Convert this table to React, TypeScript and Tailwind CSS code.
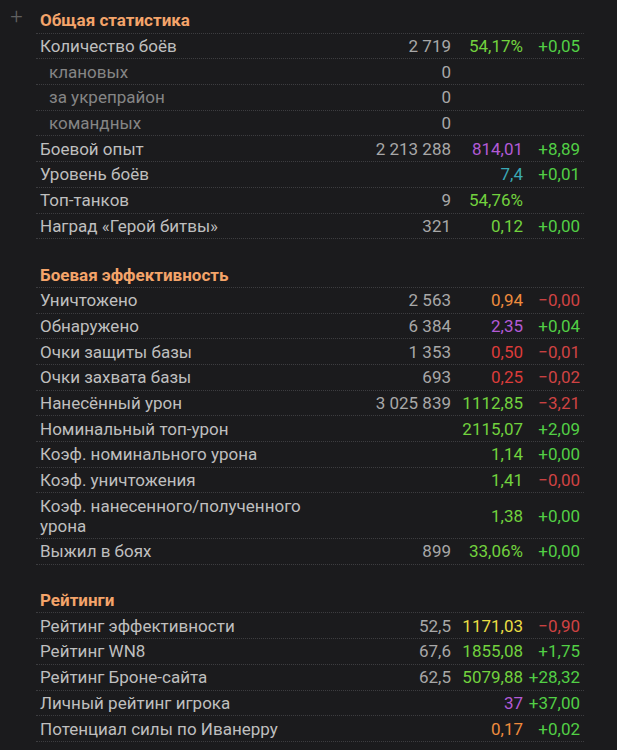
import React from 'react'

type Row = {
  label: string
  sub?: boolean
  count?: string
  value?: string
  valueColor?: string
  delta?: string
  deltaColor?: string
}

const green = 'text-[#72d23e]'
const dGreen = 'text-[#52cf45]'
const dRed = 'text-[#cf4343]'
const purple = 'text-[#b35ad6]'
const teal = 'text-[#3aa9b6]'
const orange = 'text-[#ef8c3e]'
const red = 'text-[#dc3c3a]'
const yellow = 'text-[#eadf44]'

const sections: { title: string; rows: Row[] }[] = [
  {
    title: 'Общая статистика',
    rows: [
      { label: 'Количество боёв', count: '2 719', value: '54,17%', valueColor: green, delta: '+0,05', deltaColor: dGreen },
      { label: 'клановых', sub: true, count: '0' },
      { label: 'за укрепрайон', sub: true, count: '0' },
      { label: 'командных', sub: true, count: '0' },
      { label: 'Боевой опыт', count: '2 213 288', value: '814,01', valueColor: purple, delta: '+8,89', deltaColor: dGreen },
      { label: 'Уровень боёв', value: '7,4', valueColor: teal, delta: '+0,01', deltaColor: dGreen },
      { label: 'Топ-танков', count: '9', value: '54,76%', valueColor: green },
      { label: 'Наград «Герой битвы»', count: '321', value: '0,12', valueColor: green, delta: '+0,00', deltaColor: dGreen },
    ],
  },
  {
    title: 'Боевая эффективность',
    rows: [
      { label: 'Уничтожено', count: '2 563', value: '0,94', valueColor: orange, delta: '−0,00', deltaColor: dRed },
      { label: 'Обнаружено', count: '6 384', value: '2,35', valueColor: purple, delta: '+0,04', deltaColor: dGreen },
      { label: 'Очки защиты базы', count: '1 353', value: '0,50', valueColor: red, delta: '−0,01', deltaColor: dRed },
      { label: 'Очки захвата базы', count: '693', value: '0,25', valueColor: red, delta: '−0,02', deltaColor: dRed },
      { label: 'Нанесённый урон', count: '3 025 839', value: '1112,85', valueColor: green, delta: '−3,21', deltaColor: dRed },
      { label: 'Номинальный топ-урон', value: '2115,07', valueColor: green, delta: '+2,09', deltaColor: dGreen },
      { label: 'Коэф. номинального урона', value: '1,14', valueColor: green, delta: '+0,00', deltaColor: dGreen },
      { label: 'Коэф. уничтожения', value: '1,41', valueColor: green, delta: '−0,00', deltaColor: dRed },
      { label: 'Коэф. нанесенного/полученного урона', value: '1,38', valueColor: green, delta: '+0,00', deltaColor: dGreen },
      { label: 'Выжил в боях', count: '899', value: '33,06%', valueColor: green, delta: '+0,00', deltaColor: dGreen },
    ],
  },
  {
    title: 'Рейтинги',
    rows: [
      { label: 'Рейтинг эффективности', count: '52,5', value: '1171,03', valueColor: yellow, delta: '−0,90', deltaColor: dRed },
      { label: 'Рейтинг WN8', count: '67,6', value: '1855,08', valueColor: green, delta: '+1,75', deltaColor: dGreen },
      { label: 'Рейтинг Броне-сайта', count: '62,5', value: '5079,88', valueColor: green, delta: '+28,32', deltaColor: dGreen },
      { label: 'Личный рейтинг игрока', value: '37', valueColor: purple, delta: '+37,00', deltaColor: dGreen },
      { label: 'Потенциал силы по Иванерру', value: '0,17', valueColor: orange, delta: '+0,02', deltaColor: dGreen },
    ],
  },
]

export default function App() {
  return (
    <div
      className="min-h-[750px] w-full bg-[#1b1b1d] flex text-[17px] leading-5"
      style={{ fontFamily: 'Roboto, "Noto Sans", sans-serif' }}
    >
      {/* expand toggle */}
      <div className="w-9 pt-[7px] flex justify-center pr-[3px] shrink-0">
        <span className="text-[#606060] text-[22px] font-light leading-5">+</span>
      </div>

      <div className="w-[548px] pt-[8px] flex flex-col gap-[23px]">
        {sections.map((section) => (
          <div key={section.title}>
            <div className="py-[2.35px] pl-1 border-b border-dotted border-[#3d3d40] font-bold text-[#f4a46a]">
              {section.title}
            </div>
            {section.rows.map((row) => (
              <div
                key={row.label}
                className="grid grid-cols-[276px_139px_72px_61px] items-center py-[2.35px] border-b border-dotted border-[#3d3d40]"
              >
                <div className={row.sub ? 'pl-[13px] text-[#858585]' : 'pl-1 text-[#bfbfbf]'}>
                  {row.label}
                </div>
                <div className="text-right text-[#a8a8a8]">{row.count}</div>
                <div className={`text-right ${row.valueColor ?? ''}`}>{row.value}</div>
                <div className={`text-right pr-1 ${row.deltaColor ?? ''}`}>{row.delta}</div>
              </div>
            ))}
          </div>
        ))}
      </div>
    </div>
  )
}
